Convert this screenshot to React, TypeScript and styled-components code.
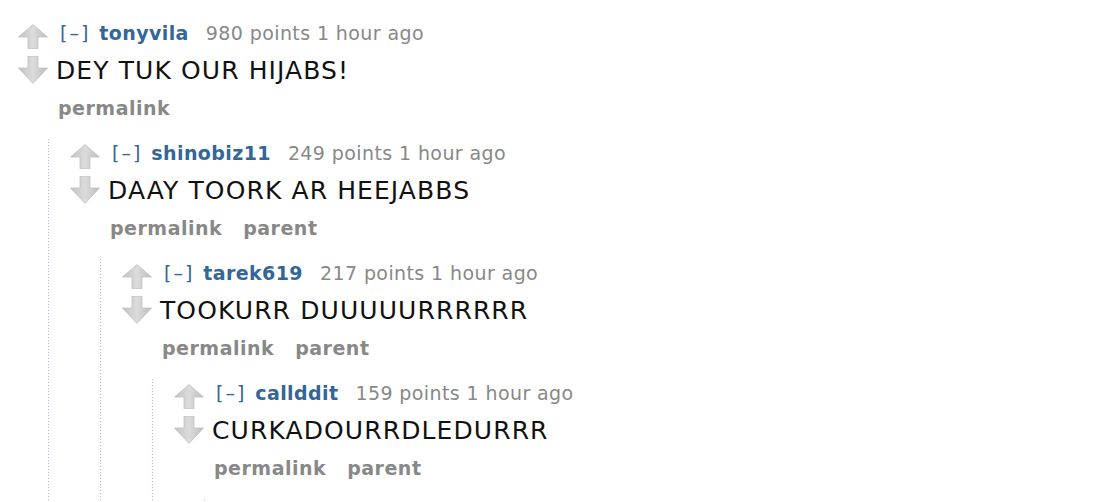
import React from 'react';
import styled, {createGlobalStyle} from 'styled-components';

const GlobalStyle = createGlobalStyle`
    html, body {
        margin: 0;
        padding: 0;
        background: #ffffff;
    }
    body {
        font-family: "DejaVu Sans", Verdana, sans-serif;
        overflow: hidden;
    }
`

type CommentData = {
    author: string,
    points: number,
    body: string,
    parent: boolean,
    replies: CommentData[]
}

const thread: CommentData = {
    author: 'tonyvila',
    points: 980,
    body: 'DEY TUK OUR HIJABS!',
    parent: false,
    replies: [{
        author: 'shinobiz11',
        points: 249,
        body: 'DAAY TOORK AR HEEJABBS',
        parent: true,
        replies: [{
            author: 'tarek619',
            points: 217,
            body: 'TOOKURR DUUUUURRRRRR',
            parent: true,
            replies: [{
                author: 'callddit',
                points: 159,
                body: 'CURKADOURRDLEDURRR',
                parent: true,
                replies: [{
                    author: '',
                    points: 0,
                    body: '',
                    parent: true,
                    replies: []
                }]
            }]
        }]
    }]
}

function Arrow(props: {up?: boolean}) {
    const id = props.up ? 'gradUp' : 'gradDown'
    // glossy grey reddit style arrow
    const pts = props.up
        ? '15,0.5 29.5,13 20,13 20,25 10,25 10,13 0.5,13'
        : '10,0 20,0 20,12 29.5,12 15,27.5 0.5,12 10,12'
    return (
        <ArrowSvg width="30" height={props.up ? 25 : 28} viewBox={props.up ? '0 0 30 25' : '0 0 30 28'}>
            <defs>
                <linearGradient id={id} x1="0" y1="0" x2="1" y2="0">
                    <stop offset="0" stopColor="#c0c0c0"/>
                    <stop offset="0.5" stopColor="#dcdcdc"/>
                    <stop offset="1" stopColor="#bcbcbc"/>
                </linearGradient>
            </defs>
            <polygon points={pts} fill={`url(#${id})`} stroke="#c2c2c2" strokeWidth="0.8"/>
        </ArrowSvg>
    )
}

function Comment({c}: {c: CommentData}) {
    if (!c.author) {
        return <Stub/>
    }
    return (
        <Thing>
            <Row>
                <MidCol>
                    <Arrow up/>
                    <Arrow/>
                </MidCol>
                <Entry>
                    <Tagline>
                        <Expand>[–]</Expand>
                        <Author>{c.author}</Author>
                        <Score>{c.points} points</Score> 1 hour ago
                    </Tagline>
                    <Body>{c.body}</Body>
                    <Buttons>
                        <Button>permalink</Button>
                        {c.parent && <Button>parent</Button>}
                    </Buttons>
                </Entry>
            </Row>
            {c.replies.length > 0 && (
                <Child>
                    {c.replies.map((r, i) => <Comment key={i} c={r}/>)}
                </Child>
            )}
        </Thing>
    )
}

export default function App() {
    return (
        <Page>
            <GlobalStyle/>
            <Comment c={thread}/>
        </Page>
    )
}

const Page = styled.div`
    width: 1096px;
    height: 502px;
    padding: 21px 0 0 18px;
    box-sizing: border-box;
    overflow: hidden;
`

const Thing = styled.div`
    display: flex;
    flex-direction: column;
`

const Row = styled.div`
    display: flex;
    align-items: flex-start;
`

const MidCol = styled.div`
    width: 40px;
    flex: none;
    display: flex;
    flex-direction: column;
    padding-top: 3px;
    gap: 7px;
`

const ArrowSvg = styled.svg`
    display: block;
`

const Entry = styled.div`
    display: flex;
    flex-direction: column;
`

const Tagline = styled.div`
    padding-left: 2px;
    font-size: 19px;
    line-height: 24px;
    letter-spacing: 0.4px;
    color: #888888;
    white-space: nowrap;
`

const Expand = styled.span`
    color: #336699;
    letter-spacing: 2px;
    margin-right: 9px;
`

const Author = styled.span`
    color: #336699;
    font-weight: bold;
    margin-right: 17px;
`

const Score = styled.span`
    color: #888888;
`

const Body = styled.div`
    margin: 11px 0 0 -2px;
    font-size: 25px;
    line-height: 30px;
    letter-spacing: 1.1px;
    color: #111111;
    white-space: nowrap;
`

const Buttons = styled.div`
    margin-top: 10px;
    display: flex;
    gap: 21px;
`

const Button = styled.span`
    font-size: 19px;
    line-height: 24px;
    letter-spacing: 0.5px;
    font-weight: bold;
    color: #888888;
`

const Child = styled.div`
    margin: 19px 0 0 30px;
    padding: 2px 0 0 22px;
    background: repeating-linear-gradient(to bottom, #b8b8ee 0 1px, transparent 1px 3px) no-repeat left top / 1px 100%;
`

const Stub = styled.div`
    height: 40px;
`
